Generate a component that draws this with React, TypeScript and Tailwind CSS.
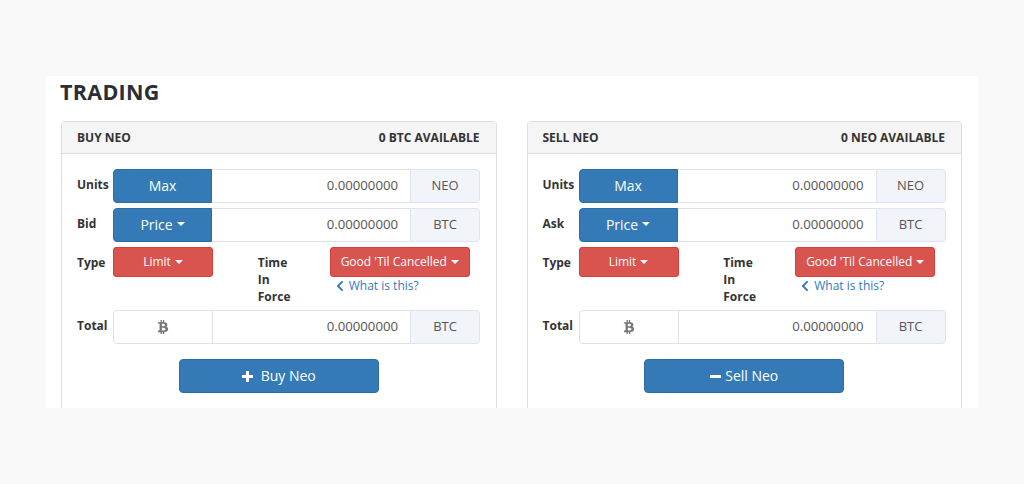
import { FaBtc, FaChevronLeft } from "react-icons/fa";

function Caret() {
  return (
    <span className="ml-[4px] inline-block h-0 w-0 border-x-4 border-t-4 border-x-transparent border-t-white align-middle" />
  );
}

function Label({ text }: { text: string }) {
  return <div className="w-9 shrink-0 pt-[7px] text-[12px] leading-[17px] font-bold text-[#333]">{text}</div>;
}

function AmountRow({ label, btn, unit, caret }: { label: string; btn: string; unit: string; caret?: boolean }) {
  return (
    <div className="flex h-[34px]">
      <Label text={label} />
      <div className="flex h-[34px] w-[99px] shrink-0 items-center justify-center rounded-l-[4px] border border-[#2e6da4] bg-[#337ab7] pb-[2px] text-[14px] text-white">
        {btn}
        {caret ? <Caret /> : null}
      </div>
      <Amount />
      <Unit text={unit} />
    </div>
  );
}

function Amount() {
  return (
    <div className="flex h-[34px] w-[198px] shrink-0 items-center justify-end border-y border-[#dde1e6] bg-white pr-[12px] text-[13.2px] text-[#555]">
      0.00000000
    </div>
  );
}

function Unit({ text }: { text: string }) {
  return (
    <div className="flex h-[34px] w-[70px] shrink-0 items-center justify-center rounded-r-[4px] border border-[#dde4ee] bg-[#f1f4f9] text-[13px] text-[#555]">
      {text}
    </div>
  );
}

function TradePanel({ side, title, available, price, action }: { side: "buy" | "sell"; title: string; available: string; price: string; action: string }) {
  return (
    <div className="h-[288px] rounded-t-[4px] border-x border-t border-[#dddddd] bg-white">
      <div className="flex h-[32px] items-center justify-between border-b border-[#dddddd] bg-[#f5f5f5] pr-[16px] pl-[15px] text-[12px] font-bold text-[#333]">
        <span>{title}</span>
        <span>{available}</span>
      </div>
      <div className="flex flex-col pt-[15px] pl-[15px]">
        <AmountRow label="Units" btn="Max" unit="NEO" />
        <div className="mt-[5px]">
          <AmountRow label={price} btn="Price" unit="BTC" caret />
        </div>
        <div className="mt-[5px] flex h-[63px]">
          <Label text="Type" />
          <div className="flex h-[30px] w-[100px] shrink-0 items-center justify-center rounded-[3px] border border-[#d43f3a] bg-[#d9534f] text-[12px] text-white">
            Limit
            <Caret />
          </div>
          <div className="ml-[44.75px] w-[72px] shrink-0 pt-[7px] text-[12px] leading-[17px] font-bold text-[#333]">
            Time
            <br />
            In
            <br />
            Force
          </div>
          <div className="flex w-[140px] shrink-0 flex-col">
            <div className="flex h-[30px] items-center justify-center rounded-[3px] border border-[#d43f3a] bg-[#d9534f] text-[12px] text-white">
              Good 'Til Cancelled
              <Caret />
            </div>
            <div className="flex h-[17px] items-center pl-[6px] text-[12px] text-[#337ab7]">
              <FaChevronLeft className="mr-[5px] h-[12px] w-[8px]" />
              What is this?
            </div>
          </div>
        </div>
        <div className="flex h-[34px]">
          <Label text="Total" />
          <div className="relative z-10 -mr-px flex h-[34px] w-[100px] shrink-0 items-center justify-center rounded-l-[4px] border border-[#dde1e6] bg-white text-[#777]">
            <FaBtc className="h-[14px] w-[14px]" />
          </div>
          <Amount />
          <Unit text="BTC" />
        </div>
        <div className="mt-[15px] flex justify-center pr-[15px]">
          <div className="flex h-[34px] w-[200px] items-center justify-center rounded-[4px] border border-[#2e6da4] bg-[#337ab7] pb-[2px] text-[14px] text-white">
            {side === "buy" ? (
              <svg className="mt-[2px] mr-[8px] h-[11px] w-[11px]" viewBox="0 0 11 11" fill="white">
                <rect x="4" width="3" height="11" />
                <rect y="4" width="11" height="3" />
              </svg>
            ) : (
              <svg className="mt-[2px] mr-[4px] h-[3px] w-[11px]" viewBox="0 0 11 3" fill="white">
                <rect width="11" height="3" />
              </svg>
            )}
            {action}
          </div>
        </div>
      </div>
    </div>
  );
}

export default function App() {
  return (
    <div className="h-[484px] overflow-hidden bg-[#f9f9f9] px-[46px] pt-[76px] font-['Open_Sans',sans-serif]">
      <div className="h-[332px] w-[932px] overflow-hidden bg-white pr-[16px] pl-[15px]">
        <h1 className="-ml-px h-[45px] pt-[1px] text-[21.5px] leading-[30px] font-bold tracking-[0.3px] text-[#2a2e35]">TRADING</h1>
        <div className="grid grid-cols-2 gap-[30px]">
          <TradePanel side="buy" title="BUY NEO" available="0 BTC AVAILABLE" price="Bid" action="Buy Neo" />
          <TradePanel side="sell" title="SELL NEO" available="0 NEO AVAILABLE" price="Ask" action="Sell Neo" />
        </div>
      </div>
    </div>
  );
}
